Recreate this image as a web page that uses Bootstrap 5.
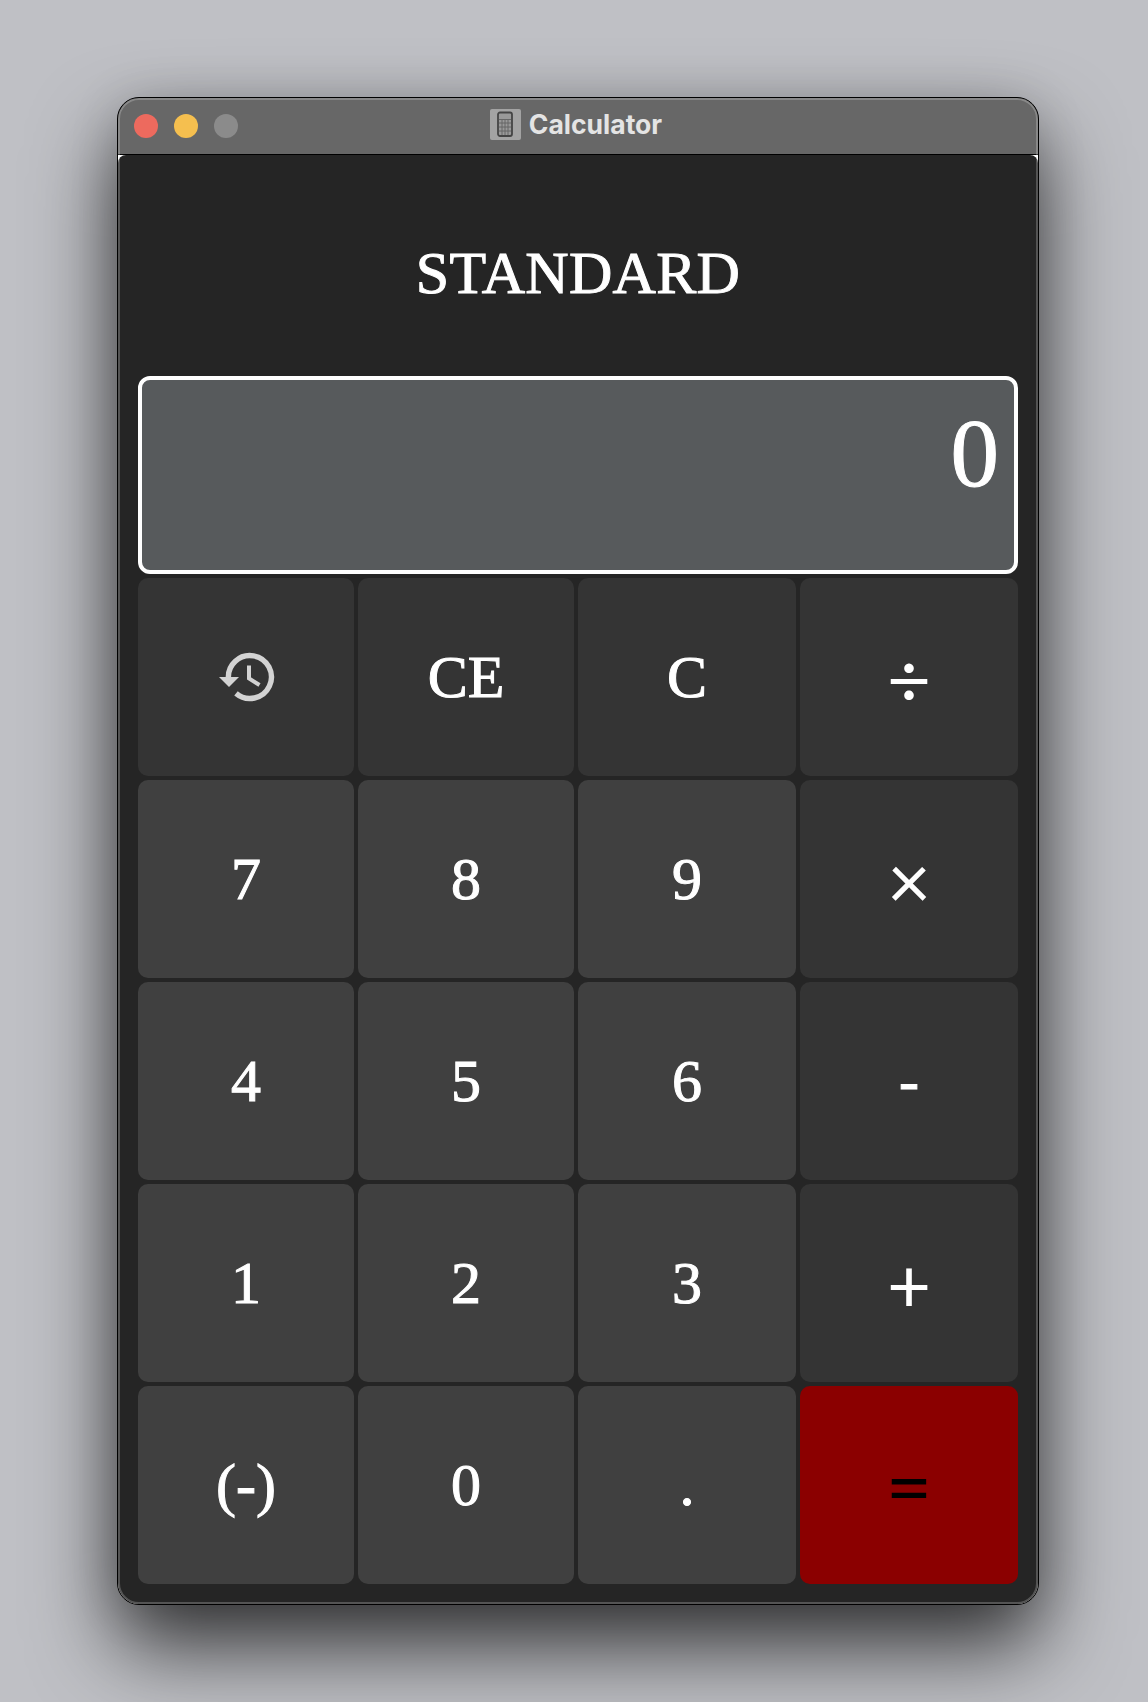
<!DOCTYPE html>
<html lang="en">
<head>
<meta charset="utf-8">
<meta name="viewport" content="width=device-width, initial-scale=1">
<title>Calculator</title>
<link href="https://cdn.jsdelivr.net/npm/bootstrap@5.3.0/dist/css/bootstrap.min.css" rel="stylesheet">
<style>
body{background:#bfc0c5;height:1702px;overflow:hidden;padding:97px 109px 97px 117px}
.calc-window{width:922px;height:1508px;border:1px solid #000;border-radius:22px;background:#252525;box-shadow:0 42px 84px rgba(0,0,0,.72),0 4px 50px rgba(0,0,0,.14);position:relative;overflow:hidden}
.calc-window::after{content:"";position:absolute;inset:0;border:2px solid rgba(255,255,255,.22);border-radius:21px;pointer-events:none}
.titlebar{height:57px;background:#676767;border-bottom:1px solid #000;padding:0 16px;display:grid;grid-template-columns:1fr auto 1fr}
.light{width:24px;height:24px;border-radius:50%}
.light-close{background:#ed6a5e}.light-min{background:#f5bf4f}.light-max{background:#8b8b8b}
.app-name{font:700 26.5px/1 Inter,sans-serif;color:#e4e4e4;letter-spacing:0;padding:0 4px 4px 0}
.calc-content{background:#fff;height:1449px}
.calc-body{background:#252525;border-radius:8px 8px 0 0;padding:0 20px 20px;height:100%}
.mode-name{height:221px;padding-top:15px;font-size:60px;line-height:1;letter-spacing:.3px}
.serif{font-family:"Liberation Serif",serif;color:#fff;-webkit-text-stroke:1px #fff}
.display-box{height:198px;border:4px solid #fff;border-radius:12px;background:#575a5c;padding:25px 15px 0 0;font-size:97px;line-height:1}
.keypad{display:grid;grid-template-columns:216px 216px 218px 218px;grid-auto-rows:198px;gap:4px;margin-top:4px}
.key{background:#404040;border:0;border-radius:10px;font-size:60px;line-height:1;padding:0;color:#fff}
.key-dark{background:#343434}
.key-op{background:#343434;font-family:Lato,sans-serif;font-size:76px;padding-top:2px}
.key-eq{background:#8b0000;color:#000;font-size:80px;padding-top:0}
</style>
<script src="https://cdn.jsdelivr.net/npm/bootstrap@5.3.0/dist/js/bootstrap.bundle.min.js"></script>
</head>
<body>
<main class="calc-window">
<header class="titlebar align-items-center">
<div class="d-flex gap-3"><span class="light light-close"></span><span class="light light-min"></span><span class="light light-max"></span></div>
<div class="d-flex align-items-center app-name gap-2">
<svg width="31" height="31" viewBox="0 0 31 31"><rect width="31" height="31" rx="2" fill="#a3a3a3"/><rect x="8" y="3.500" width="14" height="23.500" rx="2" fill="#999" stroke="#444" stroke-width="1.8"/><path d="M9 10.500h12M9 14h12M9 18h12M9 22h12M12 11v15M15 11v15M18 11v15" stroke="#666" stroke-width="1"/></svg>
<span>Calculator</span></div><span></span>
</header>
<div class="calc-content"><div class="calc-body">
<div class="mode-name serif d-flex align-items-center justify-content-center">STANDARD</div>
<div class="display-box serif text-end">0</div>
<div class="keypad">
<button class="key key-dark d-flex align-items-center justify-content-center" aria-label="History"><svg width="58" height="50" viewBox="-2 0 58 50" fill="none" stroke="#d3d3d3"><path d="M9.500 27A21.500 21.500 0 1 1 17 41.400" stroke-width="5.400"/><path d="M0 25h20L10 35z" fill="#d3d3d3" stroke="none"/><path d="M30 13.500v13l10.500 6.500" stroke-width="4"/></svg></button>
<button class="key key-dark serif">CE</button><button class="key key-dark serif">C</button><button class="key key-op">÷</button>
<button class="key serif">7</button><button class="key serif">8</button><button class="key serif">9</button><button class="key key-op">×</button>
<button class="key serif">4</button><button class="key serif">5</button><button class="key serif">6</button><button class="key key-dark serif">-</button>
<button class="key serif">1</button><button class="key serif">2</button><button class="key serif">3</button><button class="key key-op">+</button>
<button class="key serif">(-)</button><button class="key serif">0</button><button class="key serif">.</button><button class="key key-op key-eq">=</button>
</div></div></div>
</main>
</body>
</html>
